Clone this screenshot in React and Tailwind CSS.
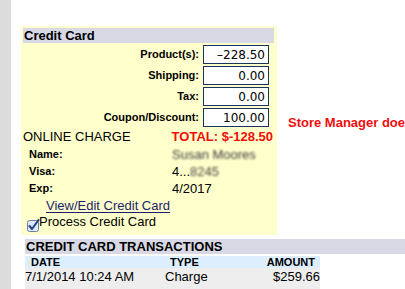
import React from "react";

function Field({ label, value }) {
  return (
    <div className="flex items-center justify-end gap-[4px] pr-[6px] h-[19px]">
      <span className="text-[11px] font-bold leading-none">{label}</span>
      <div className="w-[66px] h-[19px] border border-[#1a3260] bg-white flex items-center justify-end pr-[3px] font-['DejaVu_Sans',sans-serif] text-[12px] leading-none">
        {value}
      </div>
    </div>
  );
}

function Check() {
  return (
    <svg width="13" height="13" viewBox="0 0 13 13" className="shrink-0">
      <rect x="0.5" y="1.5" width="11" height="11" rx="2" fill="#dfe8f6" stroke="#6b7fa8" />
      <path d="M2.5 7 L5 10 L11.5 1" fill="none" stroke="#1d3f86" strokeWidth="2" strokeLinecap="round" strokeLinejoin="round" />
    </svg>
  );
}

export default function App() {
  return (
    <div className="w-[405px] h-[289px] overflow-hidden bg-white flex text-black font-['Liberation_Sans',Arial,sans-serif]">
      <div className="w-[11px] h-full bg-[#dcdcdc] shrink-0" />
      <div className="ml-[10px] pt-[26px] flex flex-col flex-1 min-w-0">
        <div className="flex items-start">
          <div className="w-[256px] shrink-0 bg-[#ffffcc] px-[2px] pt-[2px] pb-[2px]">
            <div className="h-[15px] w-[251px] bg-[#d8d9e5] pl-[1px] text-[13px] font-bold leading-[15px]">
              Credit Card
            </div>
            <div className="mt-[2px] flex flex-col gap-[2px]">
              <Field label="Product(s):" value="–228.50" />
              <Field label="Shipping:" value="0.00" />
              <Field label="Tax:" value="0.00" />
              <Field label="Coupon/Discount:" value="100.00" />
            </div>
            <div className="h-[19px] flex items-center justify-between pr-[2px]">
              <span className="text-[13px] leading-[19px]">ONLINE CHARGE</span>
              <span className="text-[13px] leading-[19px] font-bold text-[#f20d0d]">TOTAL: $-128.50</span>
            </div>
            <div className="grid grid-cols-[143px_1fr] pl-[6px] auto-rows-[17px] items-center">
              <span className="text-[11px] font-bold leading-[17px]">Name:</span>
              <span className="text-[13px] leading-[17px] text-[#3a3a3a] blur-[1.2px]">Susan Moores</span>
              <span className="text-[11px] font-bold leading-[17px]">Visa:</span>
              <span className="text-[13px] leading-[17px]">
                4...<span className="blur-[1.2px] text-[#444]">8245</span>
              </span>
              <span className="text-[11px] font-bold leading-[17px]">Exp:</span>
              <span className="text-[13px] leading-[17px]">4/2017</span>
            </div>
            <div className="pl-[23px] h-[17px] flex items-center">
              <span className="text-[13px] leading-[15px] text-[#1c1f6b] underline underline-offset-[2px]">View/Edit Credit Card</span>
            </div>
            <div className="pl-[4px] h-[19px] flex items-start">
              <div className="mt-[5px]">
                <Check />
              </div>
              <span className="-ml-[1px] text-[13px] leading-[15px]">Process Credit Card</span>
            </div>
          </div>
          <div className="ml-[11px] mt-[89px] whitespace-nowrap text-[13px] leading-[15px] font-bold text-[#f20d0d]">
            Store Manager doe
          </div>
        </div>
        <div className="ml-[4px] mt-[4px] flex flex-col">
          <div className="h-[15px] bg-[#d8d9e5] pl-[1px] text-[13px] font-bold leading-[15px] whitespace-nowrap">
            CREDIT CARD TRANSACTIONS
          </div>
          <div className="w-[295px] mt-[2px]">
            <div className="h-[12px] bg-[#ddeeff] grid grid-cols-[140px_70px_1fr] text-[11px] font-bold leading-[12px]">
              <span className="pl-[6px]">DATE</span>
              <span className="pl-[5px]">TYPE</span>
              <span className="text-right pr-[5px]">AMOUNT</span>
            </div>
            <div className="h-[22px] bg-[#eeeeee] grid grid-cols-[140px_70px_1fr] text-[13px] leading-[18px]">
              <span>7/1/2014 10:24 AM</span>
              <span>Charge</span>
              <span className="text-right">$259.66</span>
            </div>
          </div>
        </div>
      </div>
    </div>
  );
}
